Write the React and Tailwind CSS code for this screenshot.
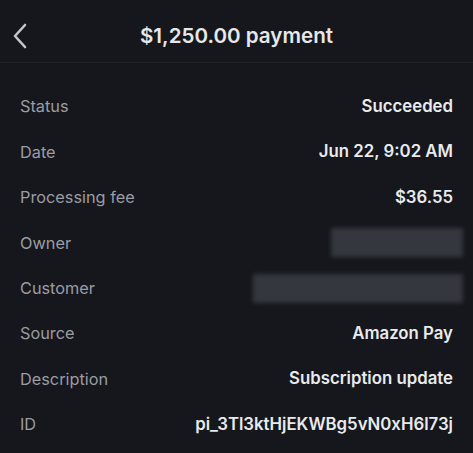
import React from 'react'

const rows = [
  { label: 'Status', value: 'Succeeded' },
  { label: 'Date', value: 'Jun 22, 9:02 AM' },
  { label: 'Processing fee', value: '$36.55' },
  { label: 'Owner', blur: 'w-[132px]' },
  { label: 'Customer', blur: 'w-[210px]' },
  { label: 'Source', value: 'Amazon Pay' },
  { label: 'Description', value: 'Subscription update' },
  { label: 'ID', value: 'pi_3Tl3ktHjEKWBg5vN0xH6l73j' },
]

function Row({ label, value, blur }) {
  return (
    <div className="flex h-[45.4px] items-center justify-between">
      <span className="text-[16.3px] text-[#9b9da4]">{label}</span>
      {blur ? (
        <div className={`${blur} -mr-[10px] h-[29px] bg-[#34373d] blur-[2px]`} />
      ) : (
        <span className="text-[16.8px] font-semibold text-[#e9eaed]">{value}</span>
      )}
    </div>
  )
}

export default function App() {
  return (
    <div className="h-[453px] w-[473px] overflow-hidden bg-[#15171c] font-['Inter',sans-serif] antialiased">
      <header className="relative flex h-[63px] items-center justify-center border-b border-[#1f2127]">
        <button type="button" className="absolute left-[10px] top-[22px] text-[#c4c6cc]" aria-label="Back">
          <svg width="20" height="28" viewBox="0 0 20 28" fill="none">
            <path d="M15 3 L5 14 L15 25" stroke="currentColor" strokeWidth="2.6" strokeLinecap="round" strokeLinejoin="round" />
          </svg>
        </button>
        <h1 className="mt-[10px] text-[20.6px] font-semibold text-[#e6e7ea]">$1,250.00 payment</h1>
      </header>
      <div className="px-[20px] pt-[21px]">
        {rows.map((row) => (
          <Row key={row.label} {...row} />
        ))}
      </div>
    </div>
  )
}
